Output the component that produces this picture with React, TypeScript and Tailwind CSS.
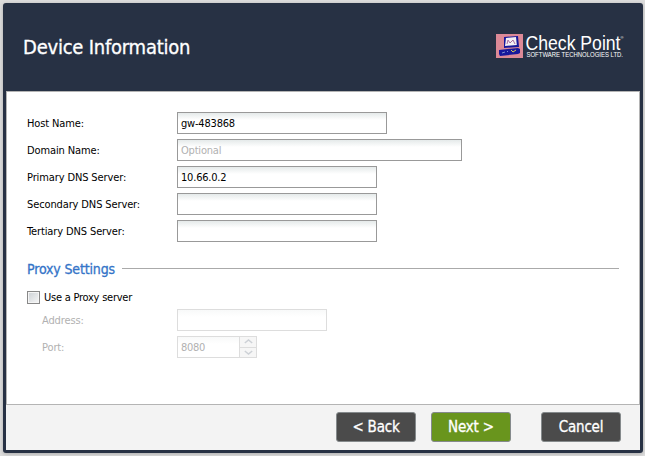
import type { ReactNode } from "react";

const field =
  "h-[22px] border border-[#999] bg-linear-to-b from-[#e5eaea] to-white to-35% flex items-center pl-[3px] pt-[3px] text-[11px] tracking-[-0.2px]";

function Row({ label, children }: { label: string; children: ReactNode }) {
  return (
    <div className="flex h-[22px] items-center">
      <div className="w-[150px] shrink-0 pt-[2px] whitespace-nowrap text-[11px] tracking-[-0.12px]">{label}</div>
      {children}
    </div>
  );
}

function Button({ className, children }: { className: string; children: ReactNode }) {
  return (
    <button
      className={`flex h-[30px] w-[80px] items-center justify-center rounded-[3px] border border-[#858a8c] pt-px text-[15px] tracking-[-0.2px] whitespace-nowrap text-white [-webkit-text-stroke:0.3px_white] ${className}`}
    >
      {children}
    </button>
  );
}

function Logo() {
  return (
    <svg className="block overflow-visible" width="128" height="26" viewBox="0 0 128 26">
      <rect width="27" height="24" fill="#dc8997" />
      <path d="M8 3 22 2 23 13 8 14Z" fill="#17189b" />
      <path d="M10 4 20 3 20.8 11 9 12Z" fill="#f3eff5" />
      <path d="m11 10 1-4 2 3 3-3 1 2 1 2" fill="none" stroke="#a76d9f" />
      <path d="m3 16 19-2 2 1v4l-2 1-18 2-1-2Z" fill="#17189b" />
      <path d="m6 19 3-1m2 0 1-1" stroke="#8190cf" />
      <path d="m15 16 2 2 3-2" fill="none" stroke="#d9c957" />
      <text x="29.5" y="15.5" fill="#fff" fontFamily="Liberation Sans" fontSize="20" textLength="95" lengthAdjust="spacingAndGlyphs">Check Point</text>
      <text x="124.5" y="5" fill="#fff" fontFamily="Liberation Sans" fontSize="4">®</text>
      <text x="30.5" y="23" fill="#fff" fontFamily="Liberation Sans" fontSize="6.8" textLength="96.5" lengthAdjust="spacingAndGlyphs">SOFTWARE TECHNOLOGIES LTD.</text>
    </svg>
  );
}

export default function App() {
  return (
    <div className="h-[456px] w-[645px] bg-[#dedede] pt-[3px] pl-[3px] font-['DejaVu_Sans_Condensed','DejaVu_Sans',sans-serif] [font-stretch:condensed]">
      <div className="flex h-[450px] w-[640px] flex-col rounded-[3px] bg-[#273144] px-[3px] pb-[3px] shadow-[0_1px_4px_#aaa]">
        <header className="flex h-[88px] shrink-0 justify-between pt-[31px] pr-[16px] pl-[17px]">
          <h1 className="text-[20px] leading-[26px] tracking-[-0.23px] whitespace-nowrap text-white [-webkit-text-stroke:0.3px_white]">Device Information</h1>
          <Logo />
        </header>
        <main className="h-[314px] shrink-0 border border-[#b4b4b4] bg-white pt-[20px] pl-[20px] text-black">
          <div className="flex flex-col gap-[5px]">
            <Row label="Host Name:"><div className={`w-[210px] ${field}`}>gw-483868</div></Row>
            <Row label="Domain Name:"><div className={`w-[285px] text-[#b1b1b1] ${field}`}>Optional</div></Row>
            <Row label="Primary DNS Server:"><div className={`w-[200px] ${field}`}>10.66.0.2</div></Row>
            <Row label="Secondary DNS Server:"><div className={`w-[200px] ${field}`} /></Row>
            <Row label="Tertiary DNS Server:"><div className={`w-[200px] ${field}`} /></Row>
          </div>
          <div className="mt-[17px] flex h-[20px] w-[592px] items-center">
            <h2 className="w-[95px] shrink-0 text-[14px] tracking-[-0.15px] whitespace-nowrap text-[#3474c8] [-webkit-text-stroke:0.3px_#3474c8]">Proxy Settings</h2>
            <div className="mb-px h-px flex-1 bg-[#aaa]" />
          </div>
          <div className="mt-[11px] flex h-[15px] items-center">
            <div className="size-[13px] border border-[#888] bg-linear-to-br from-[#ccd1d5] to-[#f7f7f7] shadow-[inset_0_0_0_1px_#f5f5f5]" />
            <span className="ml-[4px] pt-[2px] text-[11px] tracking-[-0.24px] whitespace-nowrap">Use a Proxy server</span>
          </div>
          <div className="mt-[4px] flex flex-col gap-[5px] text-[#b1b1b1]">
            <div className="flex h-[22px] items-center pl-[15px]">
              <div className="w-[135px] pt-[2px] text-[11px] tracking-[-0.12px]">Address:</div>
              <div className="h-[22px] w-[150px] border border-[#ddd] bg-linear-to-b from-[#f8f9f9] to-white to-35%" />
            </div>
            <div className="flex h-[22px] items-center pl-[15px]">
              <div className="w-[135px] pt-[2px] text-[11px] tracking-[-0.12px]">Port:</div>
              <div className="flex h-[22px] w-[63px] items-center border border-[#ddd] bg-linear-to-b from-[#f8f9f9] to-white to-35% pt-[3px] pl-[3px] text-[11px] tracking-[-0.28px]">8080</div>
              <div className="flex h-[22px] w-[17px] flex-col border border-l-0 border-[#ddd] bg-[#f6f6f6]">
                <div className="flex flex-1 items-center justify-center border-b border-[#ddd]">
                  <svg width="9" height="5"><path d="m.8 4 3.7-3 3.7 3" fill="none" stroke="#cdd1d6" strokeWidth="1.5" /></svg>
                </div>
                <div className="flex flex-1 items-center justify-center">
                  <svg width="9" height="5"><path d="m.8 1 3.7 3 3.7-3" fill="none" stroke="#cdd1d6" strokeWidth="1.5" /></svg>
                </div>
              </div>
            </div>
          </div>
        </main>
        <footer className="flex min-h-0 flex-1 items-start bg-[#f3f3f3] pt-[7px] pl-[330px]">
          <Button className="bg-[#4b4b4b]">&lt; Back</Button>
          <Button className="ml-[15px] bg-[#69951d]">Next &gt;</Button>
          <Button className="ml-[30px] bg-[#4b4b4b]">Cancel</Button>
        </footer>
      </div>
    </div>
  );
}
